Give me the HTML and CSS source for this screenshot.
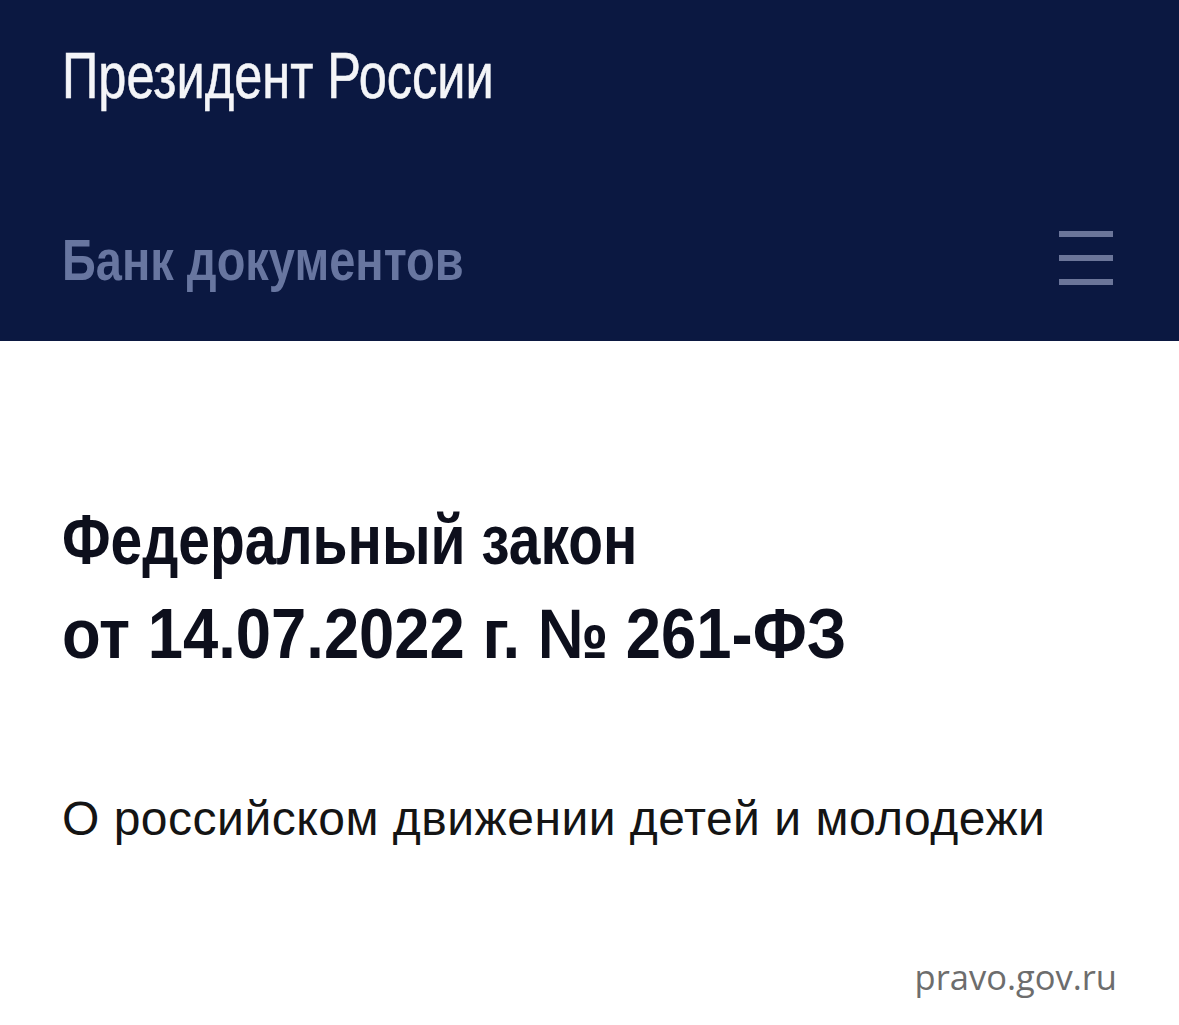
FILE: index.html
```html
<!DOCTYPE html>
<html lang="ru">
<head>
<meta charset="utf-8">
<link rel="stylesheet" href="styles.css">
</head>
<body>
<header class="header">
  <div class="brand"><span class="narrow brand-text">Президент России</span></div>
  <div class="nav">
    <div class="section"><span class="narrow section-text">Банк документов</span></div>
    <div class="burger"><span></span><span></span><span></span></div>
  </div>
</header>
<main class="content">
  <h1 class="title">
    <span class="narrow line line-1">Федеральный закон</span>
    <span class="narrow line line-2">от 14.07.2022 г. № 261-ФЗ</span>
  </h1>
  <p class="subtitle">О российском движении детей и молодежи</p>
  <div class="source">pravo.gov.ru</div>
</main>
</body>
</html>
```
FILE: styles.css
```css
html, body {
  margin: 0;
  padding: 0;
  background: #ffffff;
}
body {
  width: 1179px;
  height: 1025px;
  overflow: hidden;
  font-family: "Liberation Sans", Arial, sans-serif;
}
.narrow {
  display: block;
  white-space: nowrap;
  transform-origin: 0 50%;
}
.header {
  background: #0b1841;
  height: 341px;
  box-sizing: border-box;
  padding: 40px 62px 0 62px;
  display: flex;
  flex-direction: column;
}
.brand {
  color: #f4f5f8;
  font-size: 64px;
  line-height: 72px;
  -webkit-text-stroke: 0.6px #f4f5f8;
}
.brand-text {
  transform: scaleX(0.789);
}
.nav {
  margin-top: 114px;
  display: flex;
  align-items: center;
  justify-content: space-between;
  padding-right: 4px;
}
.section {
  flex: 1;
  color: #6876a0;
  font-size: 58px;
  font-weight: bold;
  line-height: 68px;
}
.section-text {
  transform: scaleX(0.81);
}
.burger {
  display: flex;
  flex-direction: column;
  gap: 18px;
  width: 54px;
  margin-top: -4px;
}
.burger span {
  display: block;
  height: 6px;
  background: #6b7599;
}
.content {
  padding: 0 62px;
}
.title {
  margin: 152px 0 0 0;
  font-size: 70px;
  line-height: 94px;
  font-weight: bold;
  color: #0d0f1c;
}
.line-1 {
  transform: scaleX(0.813);
}
.line-2 {
  transform: scaleX(0.905);
}
.subtitle {
  margin: 110px 0 0 0;
  font-size: 48px;
  line-height: 56px;
  letter-spacing: 0.5px;
  color: #141414;
}
.source {
  margin-top: 106px;
  text-align: right;
  font-family: "Open Sans", sans-serif;
  font-size: 34.5px;
  color: #6d6d6d;
}
```
